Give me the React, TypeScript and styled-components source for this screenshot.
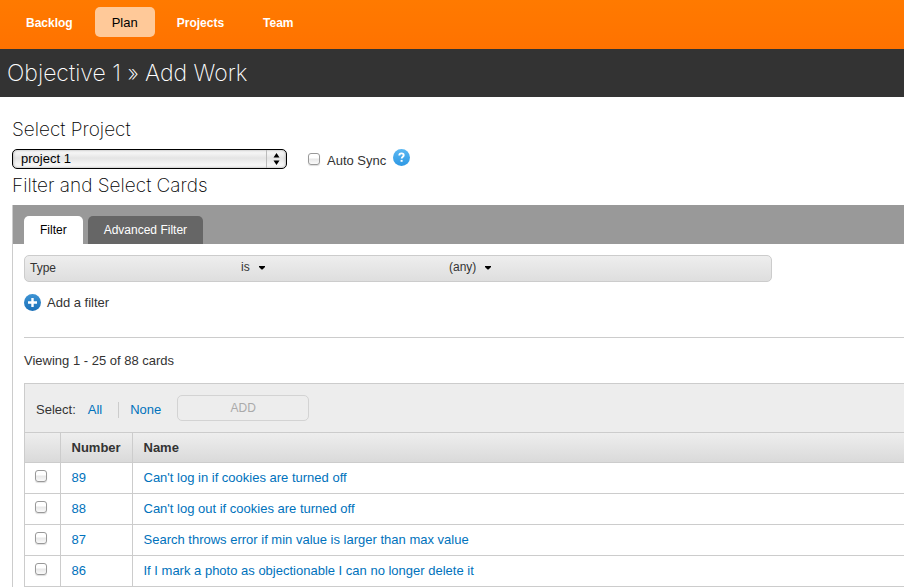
import React, { useState } from "react";
import styled, { createGlobalStyle } from "styled-components";

const GlobalStyle = createGlobalStyle`
  *, *::before, *::after { box-sizing: border-box; }
  body {
    margin: 0;
    background: #fff;
    color: #333;
    font: 13px/16px "Liberation Sans", Arial, Helvetica, sans-serif;
  }
  button, select, input { font: inherit; color: inherit; }
  a { text-decoration: none; }
`;

const Page = styled.div`
  display: flex;
  flex-direction: column;
  min-height: 100vh;
  overflow-x: hidden;
`;

const TopNav = styled.nav`
  display: flex;
  align-items: flex-start;
  gap: 5px;
  height: 49px;
  padding: 7px 9px;
  background: linear-gradient(#ff7a00, #ff7200);
`;

const NavLink = styled.a<{ $active?: boolean }>`
  padding: 8px 17px 6px;
  border-radius: 5px;
  color: ${(p) => (p.$active ? "#000" : "#fff")};
  background: ${(p) => (p.$active ? "#ffc999" : "transparent")};
  font-size: ${(p) => (p.$active ? "13px" : "12px")};
  font-weight: ${(p) => (p.$active ? 400 : 700)};
`;

const TitleBar = styled.header`
  display: flex;
  align-items: center;
  height: 48px;
  padding: 0 7px;
  background: #333;
`;

const Title = styled.h1`
  margin: 0;
  color: #fff;
  font: 200 23px/28px Inter, "Liberation Sans", sans-serif;
`;

const Content = styled.main`
  display: flex;
  flex: 1;
  flex-direction: column;
  padding: 21px 0 0 12px;
`;

const SectionTitle = styled.h2`
  margin: 0;
  color: #000;
  font: 200 19px/24px Inter, "Liberation Sans", sans-serif;
`;

const ProjectRow = styled.div`
  display: flex;
  align-items: center;
  height: 20px;
  margin: 7px 0 5px;
`;

const Overlay = styled.div`
  display: inline-grid;
  align-items: center;
  & > * { grid-area: 1 / 1; }
  & > svg { justify-self: end; pointer-events: none; }
`;

const ProjectSelect = styled.select`
  appearance: none;
  width: 275px;
  height: 20px;
  padding: 0 28px 1px 8px;
  border: 1px solid #000;
  border-radius: 5px;
  color: #000;
  background: linear-gradient(#fff, #e4e4e4 45%, #ececec 60%, #fff);
  box-shadow: inset 0 0 3px #999;
  line-height: 16px;
`;

const SyncLabel = styled.label`
  display: flex;
  align-items: center;
  gap: 7px;
  margin-left: 21px;
`;

const SyncText = styled.span`
  padding-top: 3px;
`;

const CheckBox = styled.input.attrs({ type: "checkbox" })`
  appearance: none;
  display: block;
  width: 12px;
  height: 12px;
  margin: 0;
  border: 1px solid #999;
  border-radius: 3px;
  background: linear-gradient(#fff 40%, #e8e8e8 50%, #fafafa);
  box-shadow: 0 1px 1px #ddd;
  &:checked { background: #3b99e8; }
`;

const IconButton = styled.button`
  display: flex;
  align-items: center;
  gap: 6px;
  padding: 0;
  border: 0;
  background: none;
  cursor: pointer;
`;

const HelpButton = styled(IconButton)`
  margin: 0 0 3px 7px;
`;

const Panel = styled.section`
  flex: 1;
  margin-top: 7px;
  border-left: 1px solid #ccc;
`;

const TabBar = styled.div`
  display: flex;
  align-items: flex-end;
  gap: 5px;
  height: 39px;
  padding-left: 11px;
  background: #999;
`;

const Tab = styled.button<{ $active: boolean }>`
  height: 28px;
  padding: 0 16px;
  border: 0;
  border-radius: 5px 5px 0 0;
  color: ${(p) => (p.$active ? "#000" : "#fff")};
  background: ${(p) => (p.$active ? "#fff" : "#666")};
  font-size: 12px;
`;

const PanelBody = styled.div`
  padding: 11px 0 0 11px;
`;

const FilterRow = styled.div`
  display: grid;
  grid-template-columns: 211px 208px 1fr;
  align-items: center;
  max-width: 748px;
  height: 27px;
  margin-bottom: 12px;
  padding: 0 5px 2px;
  border: 1px solid #ccc;
  border-radius: 5px;
  background: linear-gradient(#eee, #dedede);
  font-size: 12px;
`;

const FilterSelect = styled.select`
  appearance: none;
  field-sizing: content;
  height: 18px;
  padding: 0 15px 2px 0;
  border: 0;
  background: none;
`;

const Rule = styled.hr`
  height: 1px;
  margin: 26px 0 15px;
  border: 0;
  background: #ccc;
`;

const Count = styled.p`
  margin: 0 0 14px;
`;

const Cards = styled.div`
  border: 1px solid #ccc;
  border-width: 1px 0 0 1px;
`;

const Toolbar = styled.div`
  display: flex;
  align-items: center;
  height: 48px;
  padding: 3px 11px 0;
  background: #ededed;
`;

const Link = styled.a`
  color: #0072bc;
`;

const SelectLinks = styled.div`
  display: flex;
  margin-left: 12px;
  & > a + a {
    margin-left: 16px;
    padding-left: 11px;
    border-left: 1px solid #ccc;
  }
`;

const AddButton = styled.button`
  width: 132px;
  height: 26px;
  margin: 0 0 4px 16px;
  border: 1px solid #d3d3d3;
  border-radius: 5px;
  background: transparent;
  color: #aaa;
  font-size: 12px;
`;

const Table = styled.table`
  width: 100%;
  border-collapse: collapse;
  table-layout: fixed;
`;

const Cell = styled.td`
  height: 31px;
  padding: 0 11px;
  border: 1px solid #ccc;
  border-width: 1px 0 1px 1px;
  &:first-child { padding: 0 0 4px 10px; border-left: 0; }
`;

const HeadRow = styled.tr`
  background: linear-gradient(#eee, #d9d9d9);
`;

const HeadCell = styled(Cell).attrs({ as: "th" })`
  height: 30px;
  text-align: left;
`;

const SelectCol = styled.col`
  width: 35px;
`;

const NumberCol = styled.col`
  width: 72px;
`;

const StepperIcon = () => (
  <svg width="21" height="20" viewBox="0 0 21 20" aria-hidden="true">
    <path d="M.5 1v18" stroke="#bbb" />
    <path d="M7.500 8.500 10.500 4l3 4.500zM7.500 11.500l3 4.500 3-4.500z" fill="#000" />
  </svg>
);

const CaretIcon = () => (
  <svg width="6" height="4" viewBox="0 0 6 4" aria-hidden="true">
    <path d="M0 0h6v1L3.500 3.500h-1L0 1z" fill="#000" />
  </svg>
);

const HelpIcon = () => (
  <svg width="17" height="17" viewBox="0 0 17 17" aria-hidden="true">
    <defs>
      <linearGradient id="help" x2="0" y2="1">
        <stop stopColor="#5cb8f2" />
        <stop offset="1" stopColor="#2d98e4" />
      </linearGradient>
    </defs>
    <circle cx="8.500" cy="8.500" r="8.500" fill="url(#help)" />
    <path d="M6.300 6.500c0-1.500 1-2.100 2.200-2.100s2.200.7 2.200 1.900c0 1.500-2 1.500-2 3.300" fill="none" stroke="#fff" strokeWidth="1.900" />
    <path d="M7.600 10.900h2v1.900h-2z" fill="#fff" />
  </svg>
);

const PlusIcon = () => (
  <svg width="17" height="17" viewBox="0 0 17 17" aria-hidden="true">
    <defs>
      <linearGradient id="plus" x2="0" y2="1">
        <stop stopColor="#3e94d4" />
        <stop offset="1" stopColor="#1b70b8" />
      </linearGradient>
    </defs>
    <circle cx="8.500" cy="8.500" r="8.500" fill="url(#plus)" />
    <path d="M8.500 4v9M4 8.500h9" stroke="#fff" strokeWidth="2.400" />
  </svg>
);

const cards = [
  { number: 89, name: "Can't log in if cookies are turned off" },
  { number: 88, name: "Can't log out if cookies are turned off" },
  { number: 87, name: "Search throws error if min value is larger than max value" },
  { number: 86, name: "If I mark a photo as objectionable I can no longer delete it" },
];

export default function App() {
  const [tab, setTab] = useState("Filter");
  return (
    <Page>
      <GlobalStyle />
      <TopNav>
        {["Backlog", "Plan", "Projects", "Team"].map((item) => (
          <NavLink key={item} href="#" $active={item === "Plan"}>{item}</NavLink>
        ))}
      </TopNav>
      <TitleBar>
        <Title>Objective 1 » Add Work</Title>
      </TitleBar>
      <Content>
        <SectionTitle>Select Project</SectionTitle>
        <ProjectRow>
          <Overlay>
            <ProjectSelect aria-label="Project">
              <option>project 1</option>
            </ProjectSelect>
            <StepperIcon />
          </Overlay>
          <SyncLabel>
            <CheckBox />
            <SyncText>Auto Sync</SyncText>
          </SyncLabel>
          <HelpButton aria-label="Help"><HelpIcon /></HelpButton>
        </ProjectRow>
        <SectionTitle>Filter and Select Cards</SectionTitle>
        <Panel>
          <TabBar role="tablist">
            {["Filter", "Advanced Filter"].map((name) => (
              <Tab key={name} role="tab" aria-selected={tab === name} $active={tab === name} onClick={() => setTab(name)}>
                {name}
              </Tab>
            ))}
          </TabBar>
          <PanelBody>
            <FilterRow>
              <span>Type</span>
              <div>
                <Overlay>
                  <FilterSelect aria-label="Operator"><option>is</option></FilterSelect>
                  <CaretIcon />
                </Overlay>
              </div>
              <div>
                <Overlay>
                  <FilterSelect aria-label="Value"><option>(any)</option></FilterSelect>
                  <CaretIcon />
                </Overlay>
              </div>
            </FilterRow>
            <IconButton><PlusIcon />Add a filter</IconButton>
            <Rule />
            <Count>Viewing 1 - 25 of 88 cards</Count>
            <Cards>
              <Toolbar>
                <span>Select:</span>
                <SelectLinks>
                  <Link href="#">All</Link>
                  <Link href="#">None</Link>
                </SelectLinks>
                <AddButton disabled>ADD</AddButton>
              </Toolbar>
              <Table>
                <colgroup>
                  <SelectCol />
                  <NumberCol />
                  <col />
                </colgroup>
                <thead>
                  <HeadRow>
                    <HeadCell />
                    <HeadCell>Number</HeadCell>
                    <HeadCell>Name</HeadCell>
                  </HeadRow>
                </thead>
                <tbody>
                  {cards.map((card) => (
                    <tr key={card.number}>
                      <Cell><CheckBox aria-label={`Select card ${card.number}`} /></Cell>
                      <Cell><Link href="#">{card.number}</Link></Cell>
                      <Cell><Link href="#">{card.name}</Link></Cell>
                    </tr>
                  ))}
                </tbody>
              </Table>
            </Cards>
          </PanelBody>
        </Panel>
      </Content>
    </Page>
  );
}
